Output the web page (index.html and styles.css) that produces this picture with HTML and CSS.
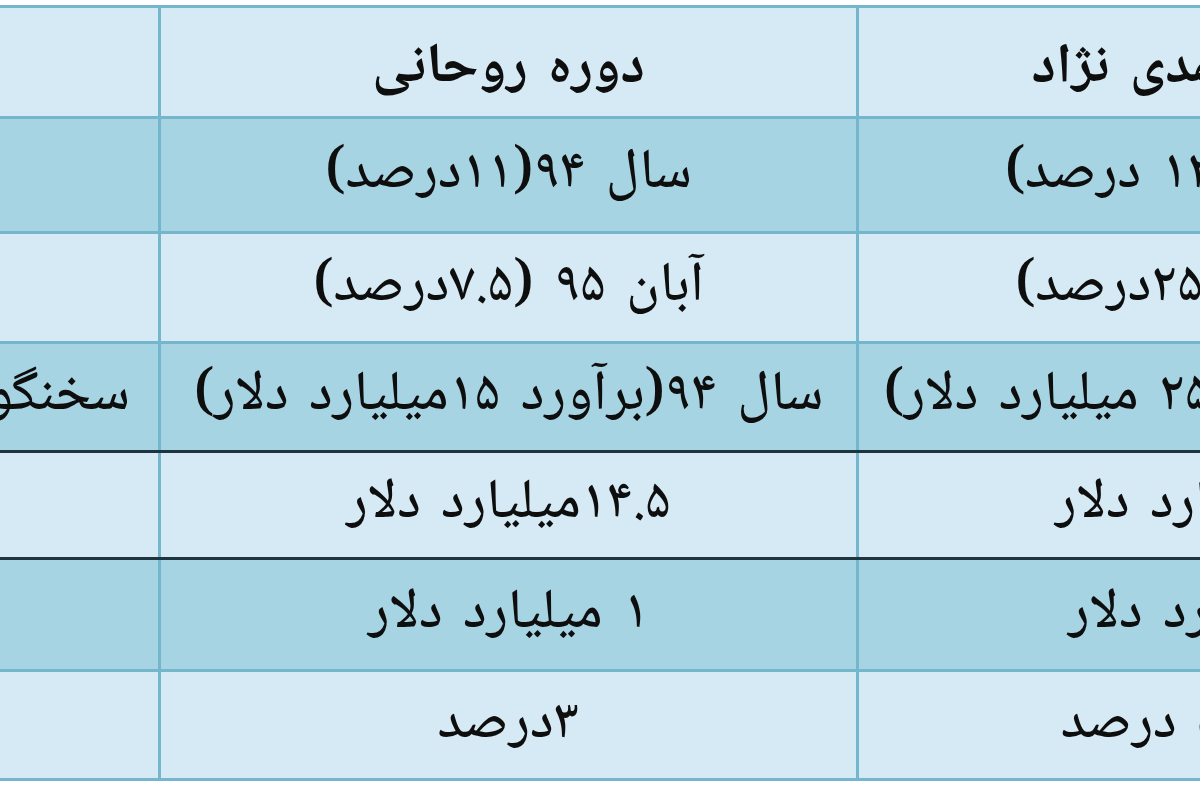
FILE: index.html
```html
<!DOCTYPE html>
<html lang="fa">
<head>
<meta charset="utf-8">
<title>مقایسه دوره‌ها</title>
<link rel="stylesheet" href="styles.css">
</head>
<body>
<div class="frame">
  <table class="cmp" dir="rtl">
    <colgroup>
      <col class="c-right">
      <col class="c-mid">
      <col class="c-left">
    </colgroup>
    <tbody>
      <tr class="r-head light">
        <td class="head">دوره احمدی نژاد</td>
        <td class="head">دوره روحانی</td>
        <td class="side"></td>
      </tr>
      <tr class="r1 dark">
        <td>سال ۸۹ (۱۲ درصد)</td>
        <td>سال ۹۴(۱۱درصد)</td>
        <td class="side"></td>
      </tr>
      <tr class="r2 light">
        <td>سال ۹۲ (۲۵درصد)</td>
        <td>آبان ۹۵ (۷.۵درصد)</td>
        <td class="side"></td>
      </tr>
      <tr class="r3 dark before-strong">
        <td>سال ۹۰(برآورد ۲۵ میلیارد دلار)</td>
        <td>سال ۹۴(برآورد ۱۵میلیارد دلار)</td>
        <td class="side">سخنگوی دولت</td>
      </tr>
      <tr class="r4 light strong">
        <td>۲۰ میلیارد دلار</td>
        <td>۱۴.۵میلیارد دلار</td>
        <td class="side"></td>
      </tr>
      <tr class="r5 dark">
        <td>۲ میلیارد دلار</td>
        <td>۱ میلیارد دلار</td>
        <td class="side"></td>
      </tr>
      <tr class="r6 light">
        <td>حدود ۵ درصد</td>
        <td>۳درصد</td>
        <td class="side"></td>
      </tr>
    </tbody>
  </table>
</div>
</body>
</html>
```

FILE: styles.css
```css
html, body {
  margin: 0;
  padding: 0;
  background: #ffffff;
}

.frame {
  width: 1200px;
  height: 800px;
  overflow: hidden;
  padding-top: 5px;
  box-sizing: border-box;
}

.cmp {
  border-collapse: collapse;
  table-layout: fixed;
  width: 1960px;
  margin-left: -402px;
  font-family: "Noto Naskh Arabic", "Noto Sans Arabic", "DejaVu Sans", sans-serif;
  font-size: 56px;
  font-weight: 500;
  word-spacing: 8px;
  line-height: 1;
  color: #0e0e0e;
}

.c-left { width: 560px; }
.c-mid { width: 698px; }
.c-right { width: 702px; }

.cmp td {
  border: 3px solid #74b6cb;
  text-align: center;
  vertical-align: middle;
  padding: 0 10px;
  white-space: nowrap;
  overflow: hidden;
}

.cmp td.side {
  text-align: right;
  padding-right: 28px;
}

.cmp td.head {
  font-weight: bold;
  padding-top: 16px;
}

.light td { background: #d5eaf4; }
.dark td { background: #a7d4e3; }

.before-strong td {
  border-bottom: 3px solid #1e3540;
}

.strong td {
  border-top: 3px solid #1e3540;
  border-bottom: 3px solid #1e3540;
}

.r-head { height: 111px; }
.r1 { height: 115px; }
.r2 { height: 110px; }
.r3 { height: 109px; }
.r4 { height: 107px; }
.r5 { height: 112px; }
.r6 { height: 109px; }
```
